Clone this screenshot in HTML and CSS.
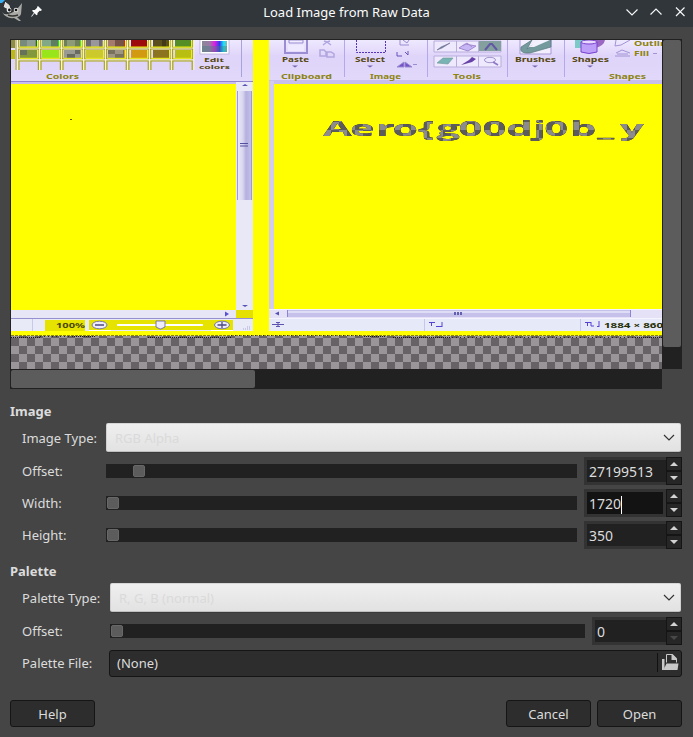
FILE: index.html
```html
<!DOCTYPE html>
<html lang="en">
<head>
<meta charset="utf-8">
<title>Load Image from Raw Data</title>
<link rel="stylesheet" href="styles.css">
</head>
<body>
<div class="dialog">
  <header class="titlebar">
    <svg class="app-icons" width="48" height="27" viewBox="0 0 48 27">
      <path d="M2 12 Q4 15 8 14 Q15 13 22 3 L21 14 Q20 17 17 17 L21 21 L19 21 L14 18 Q6 19 2 12Z" fill="#a9aaa6"/>
      <path d="M3 7 L5 1 L10 5 L11 9 L6 9Z" fill="#ddd" stroke="#282b2d"/>
      <path d="M0 0H5L2 3H0Z" fill="#39aef0"/>
      <circle cx="9" cy="10" r="2.4" fill="#eee"/><circle cx="9.4" cy="10" r="1.4" fill="#111"/>
      <circle cx="16" cy="10" r="2.3" fill="#ddd"/><circle cx="16" cy="10" r="1.3" fill="#111"/>
      <path d="M8 15 Q12 17 18 15" fill="none" stroke="#333" stroke-width="1.4"/>
      <path d="M38 6 L42 10 L40.5 11 L39.7 10.8 L37.5 13 L37.5 14.5 L36.5 15.2 L34.5 13.2 L31.8 16.8 L31.2 16.2 L34 12.8 L32 10.8 L33 10 L34.8 10 L37.2 7.8 L37 7Z" fill="#fcfcfc"/>
    </svg>
    <span class="title">Load Image from Raw Data</span>
    <svg class="window-buttons" width="75" height="27" viewBox="0 0 75 27" fill="none" stroke="#f4f5f5" stroke-width="1.2">
      <path d="M8.5 9.5 L14 15 L19.5 9.500M32.500 14.500 L38 9 L43.500 14.500M58 7.500 L66.500 16M66.500 7.500 L58 16"/>
    </svg>
  </header>

  <main>
    <section class="preview">
      <div class="view">
        <svg width="651" height="329" viewBox="11 40 651 329">
          <defs>
            <pattern id="checks" width="16" height="16" patternUnits="userSpaceOnUse" x="11" y="338">
              <path d="M0 0H16V16H0Z" fill="#999599"/><path d="M0 0h8v8H0ZM8 8h8v8h-8Z" fill="#666266"/>
            </pattern>
            <pattern id="flag-checks" width="16" height="16" patternUnits="userSpaceOnUse" patternTransform="scale(.5263 1)" x="11" y="338">
              <path d="M0 0H16V16H0Z" fill="#8c8c8c"/><path d="M0 0h8v8H0ZM8 8h8v8h-8Z" fill="#5c5c5c"/>
            </pattern>
            <linearGradient id="ribbon" x1="0" y1="0" x2="0" y2="1"><stop offset="0" stop-color="#efe9ff"/><stop offset=".4" stop-color="#dfd4f9"/><stop offset="1" stop-color="#e1d8fa"/></linearGradient>
            <linearGradient id="thumb"><stop offset="0" stop-color="#eeecfa"/><stop offset=".4" stop-color="#d7d4ef"/><stop offset=".6" stop-color="#b4b0de"/><stop offset="1" stop-color="#c5c3e8"/></linearGradient>
            <linearGradient id="rainbow"><stop offset="0" stop-color="#8b8795"/><stop offset=".3" stop-color="#9a7ba5"/><stop offset=".5" stop-color="#df20df"/><stop offset=".7" stop-color="#3538ee"/><stop offset=".87" stop-color="#15e8f5"/><stop offset="1" stop-color="#8cb3b5"/></linearGradient>
            <g id="frame"><path d="M0 40V47.5H20V40M0 59V48.8H20V59ZM.3 70V60.8H19.7V70" fill="none" stroke="#a8a410" stroke-width="1.2"/><path d="M-1.2 40V70M21.4 40V70M-1 48H21M-1 59.8H21" stroke="#fbf7dd" stroke-width=".8"/><path d="M1 47H19.2V41M1 58.3H19.2V50" fill="none" stroke="#eeee08" stroke-width="1"/></g>
          </defs>
          <rect x="11" y="40" width="651" height="296" fill="#ff0"/>

          <!-- left window: ribbon -->
          <rect x="11" y="40" width="242" height="41" fill="url(#ribbon)"/>
          <rect x="11" y="81" width="225" height="3" fill="#c8bdec"/><path d="M11 81.500H253" stroke="#8e84cf"/>
          <path d="M241.500 40V77" stroke="#aaa2dc"/>
          <g>
            <path d="M11 40h4v8h-4z" fill="#8e8c48"/><path d="M11 50h4v9h-4z" fill="#bcb817"/>
            <path d="M20 40h17v7H20z" fill="#788a7c"/><path d="M27 40h8v7h-8z" fill="#8fa092"/><path d="M36 40h1v7h-1z" fill="#087d18"/><path d="M20 50h17v8H20z" fill="#83983c"/><path d="M20 50h7v5h-7z" fill="#66715a"/>
            <path d="M42 40h17v7H42z" fill="#83a888"/><path d="M51 40h7v7h-7z" fill="#5d7f60"/><path d="M58 40h1v7h-1z" fill="#00f02a"/><path d="M42 50h17v8H42z" fill="#99e51c"/>
            <path d="M64 40h17v7H64z" fill="#6d8057"/><path d="M67 40h8v7h-8z" fill="#8d9b76"/><path d="M80 40h1v7h-1z" fill="#42ee19"/><path d="M64 50h17v8H64z" fill="#999b93"/><path d="M67 54h8v4h-8zM75 50h5v4h-5z" fill="#6a6b60"/>
            <path d="M86 40h17v7H86z" fill="#99979b"/><path d="M86 40h5v7h-5zM99 40h3v7h-3z" fill="#6d6a6f"/><path d="M86 50h17v8H86z" fill="#cbc92c"/>
            <path d="M108 40h17v7h-17z" fill="#775347"/><path d="M108 40h7v7h-7z" fill="#a47b6d"/><path d="M124 40h1v7h-1z" fill="#d22"/><path d="M108 50h17v8h-17z" fill="#77715e"/><path d="M115 50h8v4h-8zM108 54h7v4h-7z" fill="#9e9680"/><path d="M124 50h1v8h-1z" fill="#e4a50a"/>
            <path d="M131 40h16v7h-16z" fill="#9d0b0d"/><path d="M131 50h16v8h-16z" fill="#d19a10"/>
            <path d="M153 40h16v7h-16z" fill="#59501e"/><path d="M153 50h16v8h-16z" fill="#8b7320"/><path d="M162 40h4v7h-4z" fill="#403a17"/>
            <path d="M175 40h16v7h-16z" fill="#558d26"/><path d="M175 50h16v8h-16z" fill="#b9bf12"/>
            <path d="M16 40V70" stroke="#a8a410"/>
            <use href="#frame" x="18.700"/><use href="#frame" x="40.700"/><use href="#frame" x="62.700"/><use href="#frame" x="84.700"/><use href="#frame" x="106.600"/><use href="#frame" x="128.600"/><use href="#frame" x="150.600"/><use href="#frame" x="172.500"/>
          </g>
          <rect x="200" y="39" width="29" height="15" fill="#fff" stroke="#aaa4d4" stroke-width=".7"/><rect x="202" y="41" width="25" height="11" fill="url(#rainbow)"/><path d="M202 46h25v6h-25z" fill="#408080" opacity=".4"/>
          <g class="ribbon-text small">
            <text x="204" y="62" textLength="20" lengthAdjust="spacingAndGlyphs">Edit</text>
            <text x="199" y="69" textLength="31" lengthAdjust="spacingAndGlyphs">colors</text>
            <text class="group" x="46" y="79" textLength="33" lengthAdjust="spacingAndGlyphs">Colors</text>
          </g>
          <path d="M70 119.500h2" stroke="#5d5c05"/>

          <!-- left window: scrollbars and status bar -->
          <rect x="236" y="82" width="17" height="228" fill="#e9e8f7"/>
          <rect x="237" y="91" width="15" height="109" fill="url(#thumb)"/><path d="M237.500 91V200M251.500 91V200" stroke="#9d98dc"/>
          <path d="M242 86h6l-3-2zM242 305h6l-3 2z" fill="#5553b7"/><path d="M240 143.500h8M240 146h8" stroke="#5450a0"/>
          <rect x="11" y="310" width="225" height="8" fill="#e7e6f7"/><rect x="236" y="310" width="17" height="8" fill="#e6e000"/>
          <path d="M225 311.500l4 2.500-4 2.500z" fill="#5650d6"/><path d="M11 318.500H253" stroke="#9690d2"/>
          <rect x="11" y="319" width="242" height="12" fill="#e8eaf8"/><path d="M32.500 319V331" stroke="#c9c7ed"/>
          <path d="M45 320h40v11H45zM89 320h144v10H89z" fill="#e7e300"/>
          <text class="status" x="56" y="327.500" textLength="29" lengthAdjust="spacingAndGlyphs">100%</text>
          <path d="M117 325H203" stroke="#fff" stroke-width="2"/>
          <g fill="#eeecfb" stroke="#7875a7"><ellipse cx="99.500" cy="325" rx="7.500" ry="3.800"/><ellipse cx="222" cy="325" rx="7.500" ry="3.800"/><path d="M156 321h9v6l-4 2h-1l-4-2z"/></g>
          <path d="M95 325h9M217.500 325h9M222 322v6" stroke="#4b4980" stroke-width="1.300"/>
          <path d="M89 330.500h22M211 330.500h22" stroke="#fff"/><path d="M243 329h7M247 327h3" stroke="#aaa7d5" stroke-dasharray="1 1"/>

          <!-- right window: ribbon -->
          <rect x="269" y="40" width="393" height="41" fill="url(#ribbon)"/>
          <rect x="269" y="80" width="393" height="4" fill="#c8bfed"/><rect x="269" y="81" width="5" height="228" fill="#d4ccef"/>
          <path d="M344.500 40V77M427.500 40V77M507.500 40V77M564.500 40V77" stroke="#b3a8ed"/>
          <g fill="none" stroke="#9a8dd2">
            <path d="M285 40V53H307V40" stroke-width="2"/><path d="M289 40h14v3h-14z" fill="#f1ecff"/><path d="M288 45h16v6h-16z" fill="#eee9ff" stroke="none"/>
            <path d="M323 45l4-3M331 45l-4-3M324 41l3 1 3-1M320 50h4l2 2v4h-6zM327 52h4l3 2v3h-7z" stroke="#b1a6df" stroke-width="1.500"/>
            <path d="M356.500 40V52.500H385.500V40" stroke="#5834bd" stroke-dasharray="2 1"/>
            <path d="M400 40v5h9M403 40l4 3 2-3" /><path d="M397 52v4h5M405 52l3 3v-4" stroke="#6650bb"/>
            <path d="M397 67l7-5v5zM405 62l7 5h-7z" fill="#7650c6"/><path d="M413 64.500h4"/>
            <path d="M434 41h67v11h-67zM434 56h67v11h-67zM456.500 41v11M478.500 41v11M456.500 56v11M478.500 56v11" stroke="#b8addd" fill="#eee9fc"/>
          </g>
          <rect x="479" y="41" width="22" height="10" fill="#84a09e"/>
          <path d="M485 50l5-6 2 0 5 6" fill="none" stroke="#6258a5" stroke-width="2"/>
          <path d="M437 50l4-3 9-4-8 5z" fill="#64849d" stroke="#716b94" stroke-width=".6"/>
          <path d="M459 48l6-4 11 2-8 5zM463 46l4-3 5 4" fill="#c7b6f5" stroke="#a28ad0"/>
          <path d="M437 63l6-5 10 0-5 6z" fill="#78b4b3" stroke="#70949a" stroke-width=".6"/>
          <path d="M461 65l8-5 3-3 4 2-4 3-7 2z" fill="#6740a8"/>
          <ellipse cx="490" cy="60" rx="5.500" ry="2.700" fill="#ede8ff" stroke="#a294cc"/><path d="M493 62l5 3" stroke="#9076c8" stroke-width="1.600"/>
          <path d="M520 40V54H551V40" fill="#f2eefe" stroke="#a798d7"/>
          <path d="M521 47q-2 7 9 6l21-6v-7h-5l-15 6-4 3 5-9z" fill="#759a9d" stroke="#56777b" stroke-width=".7"/><path d="M529 47l10-7h11l-16 7z" fill="#f4f1ff"/>
          <path d="M575 40h17v8h-17z" fill="#7bcac7"/><path d="M589 40h16q-1 6-10 8z" fill="#9b69c4"/>
          <path d="M581 42v10q8 3 16 0V42z" fill="#bd9ef8" stroke="#7942ce"/><ellipse cx="589" cy="42" rx="8" ry="2" fill="#eadaff" stroke="#7942ce"/>
          <path d="M616 40l-1 6 6-1 9-5M616 53l6-3 8 3M615 56h15M617 54h11" fill="none" stroke="#a294d6"/>
          <g class="ribbon-text">
            <text x="282" y="62" textLength="27" lengthAdjust="spacingAndGlyphs">Paste</text>
            <text x="355" y="62" textLength="30" lengthAdjust="spacingAndGlyphs">Select</text>
            <text x="515" y="62" textLength="41" lengthAdjust="spacingAndGlyphs">Brushes</text>
            <text x="572" y="62" textLength="37" lengthAdjust="spacingAndGlyphs">Shapes</text>
            <g class="group">
              <text x="281" y="79" textLength="51" lengthAdjust="spacingAndGlyphs">Clipboard</text>
              <text x="370" y="79" textLength="31" lengthAdjust="spacingAndGlyphs">Image</text>
              <text x="453" y="79" textLength="28" lengthAdjust="spacingAndGlyphs">Tools</text>
              <text x="609" y="79" textLength="37" lengthAdjust="spacingAndGlyphs">Shapes</text>
              <text x="634" y="45.500" textLength="39" lengthAdjust="spacingAndGlyphs">Outline</text>
              <text x="634" y="56" textLength="15" lengthAdjust="spacingAndGlyphs">Fill</text>
            </g>
          </g>
          <path d="M292 65.500h6l-3 2zM367 65.500h6l-3 2zM532 65.500h6l-3 2zM587 65.500h6l-3 2z" fill="#7663b0"/><path d="M653 53.500h4" stroke="#a294d6"/>

          <text class="flag" transform="scale(1.9 1)" y="136" x="170 184.200 197.900 206.500 220 229.700 241.300 253.900 266.500 280.700 286.500 300 314.200 326.300">Aero{g00dj0b_y</text>

          <!-- right window: scrollbar and status bar -->
          <rect x="269" y="309" width="393" height="9" fill="#e5e2f8"/><path d="M269 309.500H662M269 318.500H662" stroke="#f5f3ff"/>
          <rect x="288" y="310" width="342" height="7" fill="#c6c1ea"/><path d="M288 312H630" stroke="#dfdcf5" stroke-width="2"/><path d="M287.500 310V317M630.500 310V317" stroke="#8985d5"/>
          <path d="M275 313.500l4-2v4z" fill="#5450b5"/><path d="M454 313.500h9" stroke="#6460b0" stroke-width="3" stroke-dasharray="2 1"/>
          <rect x="269" y="319" width="393" height="12" fill="#e6e9f7"/><path d="M424.500 319V331M580.500 319V331" stroke="#c9c6eb"/>
          <path d="M272 324.500h12M276 322.500h4M276 326.500h4M278 322v5" stroke="#5c55ae"/>
          <path d="M429 322.500h6M431.500 322v4M436 326.500h6M442 322v5M585 322.500h6M587.500 322v4M591 322v4h3M597 326.500h2M599 321v6" fill="none" stroke="#5643d6"/>
          <text class="status size" x="604" y="327.500" textLength="59" lengthAdjust="spacingAndGlyphs">1884 × 860</text>

          <!-- transparency below the decoded rows -->
          <rect x="11" y="336" width="651" height="33" fill="url(#checks)"/>
          <path d="M11 335.500H662" stroke="#888518" stroke-dasharray="3 1"/>
          <path d="M11 337.500H40M74 336.500H96M148 337.500H231M364 336.500H386M393 337.500H450M635 337.500H662" stroke="#181618" stroke-dasharray="1 1"/>
          <path d="M40 336.500H74M231 335.500H362M452 337.500H635" stroke="#222" stroke-dasharray="1 3"/>
        </svg>
      </div>
      <div class="scroll-v"><i></i></div>
      <div class="scroll-h"><i></i></div>
    </section>

    <section class="group-box">
      <h2>Image</h2>
      <div class="form image-form">
        <label>Image Type:</label>
        <div class="combo"><span>RGB Alpha</span><svg width="12" height="8" viewBox="0 0 12 8"><path d="M1 1 L6 6 L11 1" fill="none" stroke="#333" stroke-width="1.2"/></svg></div>
        <label>Offset:</label>
        <div class="row"><div class="slider at-27"><i></i></div><div class="spin"><span class="entry">27199513</span><span class="steps"><b class="up"></b><b class="down"></b></span></div></div>
        <label>Width:</label>
        <div class="row"><div class="slider"><i></i></div><div class="spin"><span class="entry focused">1720</span><span class="steps"><b class="up"></b><b class="down"></b></span></div></div>
        <label>Height:</label>
        <div class="row"><div class="slider"><i></i></div><div class="spin"><span class="entry">350</span><span class="steps"><b class="up"></b><b class="down"></b></span></div></div>
      </div>
    </section>

    <section class="group-box palette">
      <h2>Palette</h2>
      <div class="form palette-form">
        <label>Palette Type:</label>
        <div class="combo"><span>R, G, B (normal)</span><svg width="12" height="8" viewBox="0 0 12 8"><path d="M1 1 L6 6 L11 1" fill="none" stroke="#333" stroke-width="1.2"/></svg></div>
        <label>Offset:</label>
        <div class="row"><div class="slider"><i></i></div><div class="spin narrow"><span class="entry">0</span><span class="steps"><b class="up"></b><b class="down disabled"></b></span></div></div>
        <label>Palette File:</label>
        <div class="file"><span>(None)</span><svg width="24" height="20" viewBox="0 0 24 20"><path d="M.5 0V19" stroke="#111"/><path d="M5 6H7.500V14.500L6.500 17H5ZM9.500 10.500H21.500L20.500 17H6.500Z" fill="#c8c8c8"/><path d="M9.500 9.500V1.500H15L19.500 6V9.500" fill="none" stroke="#c8c8c8"/><path d="M14.500 1H15.500L20 5.500V7H14.500Z" fill="#c8c8c8"/></svg></div>
      </div>
    </section>

    <footer class="actions">
      <button>Help</button><span class="spacer"></span><button>Cancel</button><button>Open</button>
    </footer>
  </main>
</div>
</body>
</html>
```
FILE: styles.css
```css
* { box-sizing: border-box; }
body { margin: 0; background: #454545; color: #dcdcdc; font: 13px/20px "Noto Sans", "Open Sans", sans-serif; }
.dialog { width: 693px; height: 737px; overflow: hidden; }
.titlebar { height: 27px; display: grid; grid-template-columns: 75px 1fr 75px; background: #31363b; color: #fcfcfc; }
.title { text-align: center; line-height: 25px; }
main { padding: 12px 11px 0 10px; }

.preview { display: grid; grid-template: 330px 20px / 652px 20px; }
.view { border: 1px solid #222; border-right: 0; border-bottom: 0; overflow: hidden; }
.view svg { display: block; }
.scroll-v, .scroll-h { background: #212121; padding: 1px; }
.scroll-v i, .scroll-h i { display: block; background: #5c5c5c; border-radius: 2px; }
.scroll-v i { height: 307px; }
.scroll-h i { width: 244px; height: 18px; }
.ribbon-text { font: 700 6.5px "Noto Sans", sans-serif; fill: #55470f; }
.small { font-size: 5px; }
.ribbon-text .group { fill: #8d8410; font-size: 6.5px; }
.status { font: 700 7px "Noto Sans", sans-serif; fill: #494608; }
.size { fill: #273009; }
.flag { font: 700 22px "Open Sans", "Noto Sans", sans-serif; fill: url(#flag-checks); filter: drop-shadow(.6px .7px 0 #250512); }

.group-box { margin-top: 12px; }
h2 { margin: 0; font-size: 13px; line-height: 20px; font-weight: 700; }
.form { display: grid; grid-template-rows: 34px; grid-auto-rows: 32px; align-items: center; padding-left: 12px; }
.form label { line-height: 20px; }
.form label:first-child { margin-bottom: 1px; }
.image-form { grid-template-columns: 84px 576px; margin-bottom: -2px; }
.palette-form { grid-template-columns: 88px 572px; }
.combo { height: 29px; width: calc(100% - 1px); margin-bottom: 1px; padding: 0 5px 0 8px; display: flex; align-items: center; justify-content: space-between; border-radius: 2px; background: linear-gradient(#efefef, #e2e2e2); border: 1px solid #fff; border-color: #d6d6d6 #d0d0d0 #c0c0c0; color: #dadada; box-shadow: 0 1px #3b3b3b; }
.row { display: flex; justify-content: space-between; align-items: center; }
.slider { width: 471px; height: 14px; padding: 1px; background: #212121; }
.palette .slider { width: 475px; }
.slider i { display: block; width: 12px; height: 12px; border-radius: 2px; background: #5c5c5c; border: 1px solid #686868; }
.at-27 i { margin-left: 26px; }
.spin { width: 98px; height: 28px; display: flex; background: #333; }
.narrow { width: 90px; }
.entry { flex: 1; margin: 3px 0 3px 3px; padding-left: 2px; background: #212121; line-height: 24px; font-size: 14px; height: 22px; }
.focused { background: #131313; margin-right: 3px; }
.focused::after { content: ""; display: inline-block; width: 1px; height: 18px; background: #fff; vertical-align: middle; }
.steps { width: 16px; background: #151515; padding: 1px; display: grid; grid-template-rows: 12px 12px; gap: 2px; }
.steps b { background: #262626; display: grid; place-items: center; }
.steps b::before { content: ""; border: 4px solid transparent; border-top: 0; border-bottom-color: #d2d2d2; }
.steps .down::before { border-top: 4px solid #d2d2d2; border-bottom: 0; }
.steps .disabled::before { border-top-color: #484848; }
.file { height: 27px; margin-left: -1px; padding: 0 0 0 7px; background: #2d2d2d; border: 1px solid #151515; border-radius: 3px; display: flex; align-items: center; justify-content: space-between; }
.actions { display: flex; gap: 6px; margin-top: 21px; width: 672px; }
.spacer { flex: 1; }
button { width: 85px; height: 27px; padding: 0; font: inherit; color: #dcdcdc; background: #2d2d2d; border: 1px solid #151515; border-radius: 3px; }
```
